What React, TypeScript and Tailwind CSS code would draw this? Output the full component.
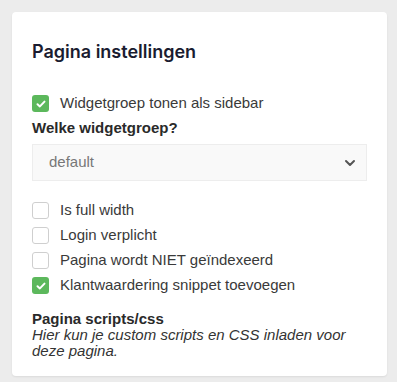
import React from "react";

function Check({ checked }: { checked: boolean }) {
  if (checked) {
    return (
      <span className="flex h-[17px] w-[17px] shrink-0 items-center justify-center rounded-[3px] bg-[#5cb85c]">
        <svg width="10" height="8" viewBox="0 0 10 8" fill="none">
          <path d="M1.5 4.2 L3.9 6.4 L8.5 1.6" stroke="white" strokeWidth="2" strokeLinecap="round" strokeLinejoin="round" />
        </svg>
      </span>
    );
  }
  return <span className="h-[17px] w-[17px] shrink-0 rounded-[3px] border border-[#cfcfcf] bg-white" />;
}

function Row({ checked, label }: { checked: boolean; label: string }) {
  return (
    <div className="flex h-[25px] items-center gap-[11px]">
      <Check checked={checked} />
      <span className="text-[15px] text-[#3a3a3a]">{label}</span>
    </div>
  );
}

export default function App() {
  return (
    <div className="min-h-[382px] w-[397px] bg-[#ececec] pl-3 pr-[10px] pt-3 pb-2" style={{ fontFamily: '"Liberation Sans", Arial, sans-serif' }}>
      <div className="rounded-[4px] bg-white pl-5 pr-[20px] pb-[17px] pt-[28px] shadow-[0_1px_2px_rgba(0,0,0,0.08)]">
        <h2 className="text-[18px] font-semibold leading-6 text-[#1a1c30]" style={{ fontFamily: 'Inter, "Noto Sans", sans-serif' }}>
          Pagina instellingen
        </h2>
        <div className="mt-[27px]">
          <Row checked label="Widgetgroep tonen als sidebar" />
          <div className="flex h-[25px] items-center text-[15px] font-bold text-[#2a2a2a]">Welke widgetgroep?</div>
          <div className="mt-[3px] flex h-[37px] items-center justify-between border border-[#ededed] bg-[#f9f9f9] pl-4 pr-[10px]">
            <span className="text-[15px] text-[#777]">default</span>
            <svg width="12" height="8" viewBox="0 0 12 8" fill="none">
              <path d="M2 2 L6 6 L10 2" stroke="#555" strokeWidth="2" strokeLinecap="round" strokeLinejoin="round" />
            </svg>
          </div>
          <div className="mt-[17px]">
            <Row checked={false} label="Is full width" />
            <Row checked={false} label="Login verplicht" />
            <Row checked={false} label="Pagina wordt NIET geïndexeerd" />
            <Row checked label="Klantwaardering snippet toevoegen" />
          </div>
          <div className="mt-[13px] text-[15px] font-bold leading-4 text-[#2a2a2a]">Pagina scripts/css</div>
          <div className="text-[15px] italic leading-4 text-[#333]">
            Hier kun je custom scripts en CSS inladen voor deze pagina.
          </div>
        </div>
      </div>
    </div>
  );
}
